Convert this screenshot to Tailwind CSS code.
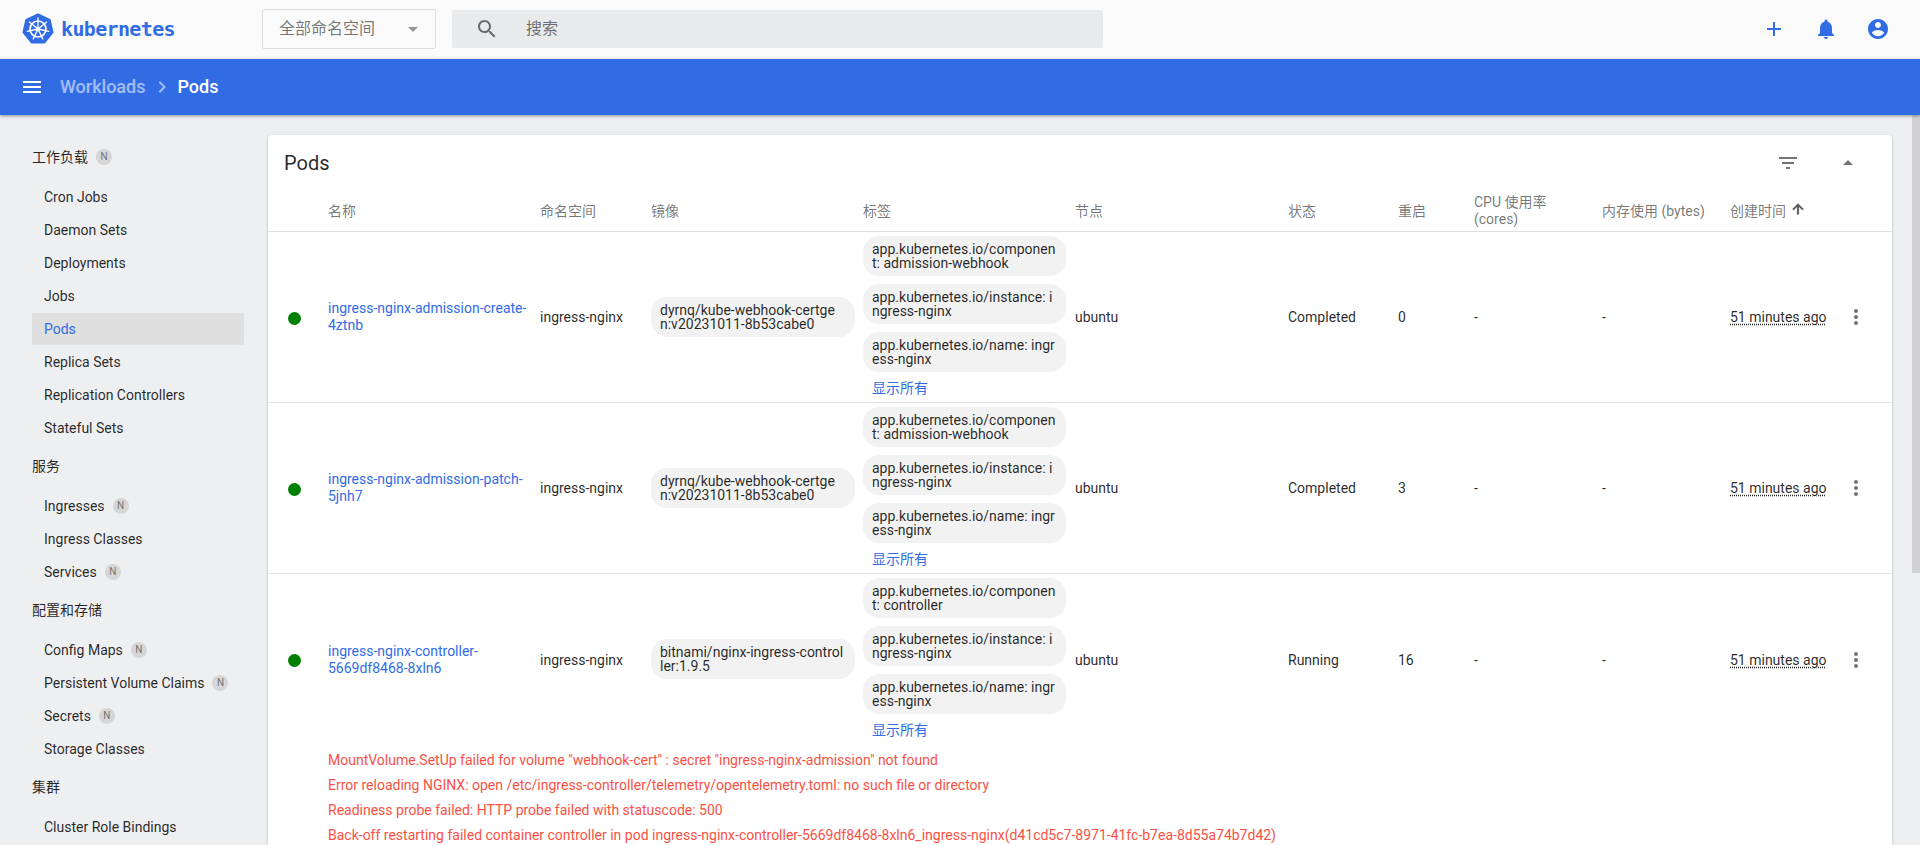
<!DOCTYPE html>
<html lang="zh">
<head>
    <meta charset="UTF-8">
    <meta name="viewport" content="width=device-width, initial-scale=1.0">
    <title>Pods - Kubernetes Dashboard</title>
    <script src="https://cdn.jsdelivr.net/npm/@tailwindcss/browser@4"></script>
</head>
<body class="h-screen overflow-hidden flex flex-col bg-[#eeeff1] text-sm text-black/85 font-['Roboto','Noto_Sans_CJK_SC',sans-serif]">

    <!-- top bar -->
    <header class="h-[59px] pb-px shrink-0 bg-[#fafafa] flex items-center">
        <div class="w-[262px] shrink-0 pl-[22px] flex items-center">
            <svg class="w-[32px] h-[32px] shrink-0" viewBox="0 0 32 32">
                <polygon points="16,1.5 27.5,7 30.3,19.2 22.3,29.3 9.7,29.3 1.7,19.2 4.5,7" fill="#326ce5" stroke="#326ce5" stroke-width="2.4" stroke-linejoin="round"/>
                <g fill="none" stroke="#fff" stroke-linecap="round">
                    <circle cx="16" cy="16" r="8" stroke-width="1.7"/>
                    <path stroke-width="1.3" d="M16 16V5M16 16L24.6 9.1M16 16L26.7 18.4M16 16L20.8 25.9M16 16L11.2 25.9M16 16L5.3 18.4M16 16L7.4 9.1"/>
                </g>
                <circle cx="16" cy="16" r="2.2" fill="#fff"/>
            </svg>
            <span class="ml-[7px] text-[20px] font-bold tracking-[-0.65px] text-[#326ce5] font-['DejaVu_Sans_Mono',monospace]">kubernetes</span>
        </div>
        <div class="w-[174px] h-10 shrink-0 border border-[#dedede] rounded-[2px] pl-4 pr-[17px] flex items-center justify-between text-base text-black/55">
            <span>全部命名空间</span>
            <span class="w-0 h-0 border-x-[5px] border-x-transparent border-t-[5px] border-t-black/40"></span>
        </div>
        <div class="w-[651px] h-[38px] ml-4 shrink-0 bg-[#e8eaeb] rounded-[2px] pl-[23px] flex items-center text-base text-black/55">
            <svg class="w-6 h-6 fill-black/55" viewBox="0 0 24 24"><path d="M15.5 14h-.79l-.28-.27C15.41 12.59 16 11.11 16 9.5 16 5.91 13.09 3 9.5 3S3 5.91 3 9.5 5.91 16 9.5 16c1.61 0 3.09-.59 4.23-1.57l.27.28v.79l5 4.99L20.49 19l-4.99-5zm-6 0C7.01 14 5 11.99 5 9.5S7.01 5 9.5 5 14 7.01 14 9.5 11.99 14 9.5 14z"/></svg>
            <span class="ml-[27px]">搜索</span>
        </div>
        <div class="ml-auto pr-[30px] flex items-center gap-7">
            <svg class="w-6 h-6 fill-[#326ce5]" viewBox="0 0 24 24"><path d="M19 13h-6v6h-2v-6H5v-2h6V5h2v6h6v2z"/></svg>
            <svg class="w-6 h-6 fill-[#326ce5]" viewBox="0 0 24 24"><path d="M12 22c1.1 0 2-.9 2-2h-4c0 1.1.89 2 2 2zm6-6v-5c0-3.07-1.64-5.64-4.5-6.32V4c0-.83-.67-1.5-1.5-1.5s-1.5.67-1.5 1.5v.68C7.63 5.36 6 7.92 6 11v5l-2 2v1h16v-1l-2-2z"/></svg>
            <svg class="w-6 h-6 fill-[#326ce5]" viewBox="0 0 24 24"><path d="M12 2C6.48 2 2 6.48 2 12s4.48 10 10 10 10-4.48 10-10S17.52 2 12 2zm0 3c1.66 0 3 1.34 3 3s-1.34 3-3 3-3-1.34-3-3 1.34-3 3-3zm0 14.2c-2.5 0-4.71-1.28-6-3.22.03-1.99 4-3.08 6-3.08 1.99 0 5.97 1.09 6 3.08-1.29 1.94-3.5 3.22-6 3.22z"/></svg>
        </div>
    </header>

    <!-- breadcrumb bar -->
    <div class="relative z-10 h-14 shrink-0 bg-[#326ce5] shadow-[0_1px_3px_rgba(0,0,0,0.4)] pl-5 flex items-center text-lg font-medium">
        <svg class="w-6 h-6 fill-white" viewBox="0 0 24 24"><path d="M3 18h18v-2H3v2zm0-5h18v-2H3v2zm0-7v2h18V6H3z"/></svg>
        <span class="ml-4 text-white/55">Workloads</span>
        <svg class="w-6 h-6 ml-[5px] fill-white/55" viewBox="0 0 24 24"><path d="M8.59 16.59L13.17 12 8.59 7.41 10 6l6 6-6 6z"/></svg>
        <span class="ml-[3px] text-white">Pods</span>
    </div>

    <div class="flex-1 min-h-0 flex">
        <!-- side nav -->
        <nav class="w-[268px] shrink-0 pt-5">
            <section class="mt-1.5">
                <div class="h-8 mb-2 pl-8 flex items-center">工作负载<span class="ml-2 w-4 h-4 rounded-full bg-[#d6d6d6] text-[10px] text-black/50 flex items-center justify-center">N</span></div>
                <a class="h-8 mb-px ml-8 w-[212px] pl-3 flex items-center rounded-[2px]">Cron Jobs</a>
                <a class="h-8 mb-px ml-8 w-[212px] pl-3 flex items-center rounded-[2px]">Daemon Sets</a>
                <a class="h-8 mb-px ml-8 w-[212px] pl-3 flex items-center rounded-[2px]">Deployments</a>
                <a class="h-8 mb-px ml-8 w-[212px] pl-3 flex items-center rounded-[2px]">Jobs</a>
                <a class="h-8 mb-px ml-8 w-[212px] pl-3 flex items-center rounded-[2px] bg-[#dfdfdf] text-[#326ce5]">Pods</a>
                <a class="h-8 mb-px ml-8 w-[212px] pl-3 flex items-center rounded-[2px]">Replica Sets</a>
                <a class="h-8 mb-px ml-8 w-[212px] pl-3 flex items-center rounded-[2px]">Replication Controllers</a>
                <a class="h-8 mb-px ml-8 w-[212px] pl-3 flex items-center rounded-[2px]">Stateful Sets</a>
            </section>
            <section class="mt-1.5">
                <div class="h-8 mb-2 pl-8 flex items-center">服务</div>
                <a class="h-8 mb-px ml-8 w-[212px] pl-3 flex items-center rounded-[2px]">Ingresses<span class="ml-2 w-4 h-4 rounded-full bg-[#d6d6d6] text-[10px] text-black/50 flex items-center justify-center">N</span></a>
                <a class="h-8 mb-px ml-8 w-[212px] pl-3 flex items-center rounded-[2px]">Ingress Classes</a>
                <a class="h-8 mb-px ml-8 w-[212px] pl-3 flex items-center rounded-[2px]">Services<span class="ml-2 w-4 h-4 rounded-full bg-[#d6d6d6] text-[10px] text-black/50 flex items-center justify-center">N</span></a>
            </section>
            <section class="mt-1.5">
                <div class="h-8 mb-2 pl-8 flex items-center">配置和存储</div>
                <a class="h-8 mb-px ml-8 w-[212px] pl-3 flex items-center rounded-[2px]">Config Maps<span class="ml-2 w-4 h-4 rounded-full bg-[#d6d6d6] text-[10px] text-black/50 flex items-center justify-center">N</span></a>
                <a class="h-8 mb-px ml-8 w-[212px] pl-3 flex items-center rounded-[2px]">Persistent Volume Claims<span class="ml-2 w-4 h-4 rounded-full bg-[#d6d6d6] text-[10px] text-black/50 flex items-center justify-center">N</span></a>
                <a class="h-8 mb-px ml-8 w-[212px] pl-3 flex items-center rounded-[2px]">Secrets<span class="ml-2 w-4 h-4 rounded-full bg-[#d6d6d6] text-[10px] text-black/50 flex items-center justify-center">N</span></a>
                <a class="h-8 mb-px ml-8 w-[212px] pl-3 flex items-center rounded-[2px]">Storage Classes</a>
            </section>
            <section class="mt-1.5">
                <div class="h-8 mb-2 pl-8 flex items-center">集群</div>
                <a class="h-8 mb-px ml-8 w-[212px] pl-3 flex items-center rounded-[2px]">Cluster Role Bindings</a>
            </section>
        </nav>

        <main class="flex-1 min-w-0 pt-5">
            <div class="h-full bg-white rounded-t-[4px] shadow-[0_1px_3px_rgba(0,0,0,0.25)]">
                <div class="h-14 pl-4 pr-8 flex items-center justify-between">
                    <h1 class="text-xl">Pods</h1>
                    <div class="flex items-center gap-9">
                        <svg class="w-6 h-6 fill-black/55" viewBox="0 0 24 24"><path d="M10 18h4v-2h-4v2zM3 6v2h18V6H3zm3 7h12v-2H6v2z"/></svg>
                        <svg class="w-6 h-6 fill-black/55" viewBox="0 0 24 24"><path d="M7 14l5-5 5 5z"/></svg>
                    </div>
                </div>
                <div class="h-[41px] border-b border-[#e0e0e0] grid grid-cols-[60px_212px_111px_212px_212px_213px_110px_76px_128px_128px_108px_54px] items-center text-black/55 leading-[17px]">
                    <div></div>
                    <div>名称</div>
                    <div>命名空间</div>
                    <div>镜像</div>
                    <div>标签</div>
                    <div>节点</div>
                    <div>状态</div>
                    <div>重启</div>
                    <div>CPU 使用率<br>(cores)</div>
                    <div>内存使用 (bytes)</div>
                    <div class="flex items-center">创建时间<svg class="w-4 h-4 ml-1 -mt-1 fill-black/60 stroke-black/60 stroke-1" viewBox="0 0 24 24"><path d="M4 12l1.41 1.41L11 7.83V20h2V7.83l5.58 5.59L20 12l-8-8-8 8z"/></svg></div>
                    <div></div>
                </div>
                <div id="rows"></div>
                <div class="mt-[3px] pl-[60px] text-[#fb5144] leading-[25px]">
                    <div>MountVolume.SetUp failed for volume "webhook-cert" : secret "ingress-nginx-admission" not found</div>
                    <div>Error reloading NGINX: open /etc/ingress-controller/telemetry/opentelemetry.toml: no such file or directory</div>
                    <div>Readiness probe failed: HTTP probe failed with statuscode: 500</div>
                    <div>Back-off restarting failed container controller in pod ingress-nginx-controller-5669df8468-8xln6_ingress-nginx(d41cd5c7-8971-41fc-b7ea-8d55a74b7d42)</div>
                </div>
            </div>
        </main>

        <div class="w-5 shrink-0"></div>
        <!-- scrollbar -->
        <div class="w-2 shrink-0"><div class="h-[458px] bg-[#d1d1d3]"></div></div>
    </div>

    <script>
        const pods = [
            { name: 'ingress-nginx-admission-create-4ztnb', image: 'dyrnq/kube-webhook-certgen:v20231011-8b53cabe0', component: 'admission-webhook', status: 'Completed', restarts: 0 },
            { name: 'ingress-nginx-admission-patch-5jnh7', image: 'dyrnq/kube-webhook-certgen:v20231011-8b53cabe0', component: 'admission-webhook', status: 'Completed', restarts: 3 },
            { name: 'ingress-nginx-controller-5669df8468-8xln6', image: 'bitnami/nginx-ingress-controller:1.9.5', component: 'controller', status: 'Running', restarts: 16 }
        ];

        function pill(text) {
            return `<div class="w-[203px] h-10 mb-2 px-[9px] py-1.5 rounded-2xl bg-[#f2f2f2] leading-[14px] break-all">${text}</div>`;
        }

        document.getElementById('rows').innerHTML = pods.map((p, i) => `
            <div class="h-[171px] ${i < 2 ? 'border-b border-[#e0e0e0]' : ''} grid grid-cols-[60px_212px_111px_212px_212px_213px_110px_76px_128px_128px_108px_54px] items-center">
                <div class="pl-5 mt-0.5"><div class="w-[13px] h-[13px] rounded-full bg-[#008000]"></div></div>
                <a class="pr-2 text-[#326ce5] leading-[17px]">${p.name}</a>
                <div>ingress-nginx</div>
                <div class="-mt-px w-[204px] h-10 pl-[9px] pr-2.5 py-1.5 rounded-2xl bg-[#f2f2f2] leading-[14px] break-all">${p.image}</div>
                <div class="self-start pt-1">
                    ${pill('app.kubernetes.io/component: ' + p.component)}
                    ${pill('app.kubernetes.io/instance: ingress-nginx')}
                    ${pill('app.kubernetes.io/name: ingress-nginx')}
                    <a class="block pl-[9px] text-[#326ce5] leading-4">显示所有</a>
                </div>
                <div>ubuntu</div>
                <div>${p.status}</div>
                <div>${p.restarts}</div>
                <div>-</div>
                <div>-</div>
                <div><span class="underline decoration-dotted underline-offset-2">51 minutes ago</span></div>
                <svg class="w-6 h-6 ml-1.5 fill-black/55" viewBox="0 0 24 24"><path d="M12 8c1.1 0 2-.9 2-2s-.9-2-2-2-2 .9-2 2 .9 2 2 2zm0 2c-1.1 0-2 .9-2 2s.9 2 2 2 2-.9 2-2-.9-2-2-2zm0 6c-1.1 0-2 .9-2 2s.9 2 2 2 2-.9 2-2-.9-2-2-2z"/></svg>
            </div>`).join('');
    </script>
</body>
</html>
